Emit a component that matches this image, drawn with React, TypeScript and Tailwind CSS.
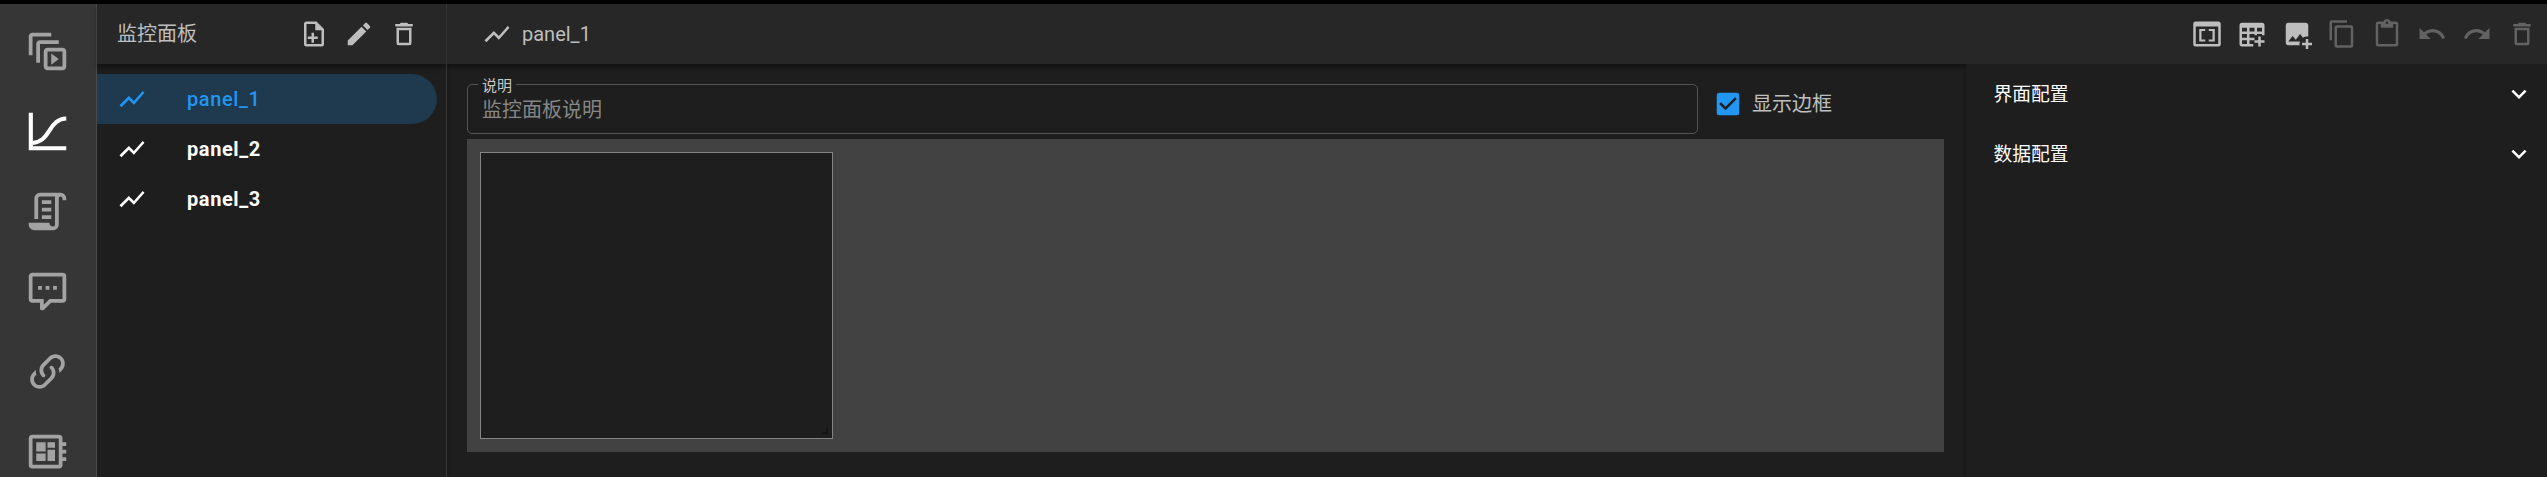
import React from "react";

const paths = {
  animation:
    "M4 2C2.9 2 2 2.9 2 4V14H4V4H14V2H4M8 6C6.9 6 6 6.9 6 8V18H8V8H18V6H8M12 10C10.9 10 10 10.9 10 12V20C10 21.1 10.9 22 12 22H20C21.1 22 22 21.1 22 20V12C22 10.9 21.1 10 20 10H12M12 12H20V20H12V12M14 13V19L18 16L14 13Z",
  script:
    "M15,20A1,1 0 0,0 16,19V4H8A1,1 0 0,0 7,5V16H5V5A3,3 0 0,1 8,2H19A3,3 0 0,1 22,5V6H20V5A1,1 0 0,0 19,4A1,1 0 0,0 18,5V9L18,19A3,3 0 0,1 15,22H5A3,3 0 0,1 2,19V18H13A2,2 0 0,0 15,20M9,6H14V8H9V6M9,10H14V12H9V10M9,14H14V16H9V14Z",
  comment:
    "M9,22A1,1 0 0,1 8,21V18H4A2,2 0 0,1 2,16V4C2,2.89 2.9,2 4,2H20A2,2 0 0,1 22,4V16A2,2 0 0,1 20,18H13.9L10.2,21.71C10,21.9 9.75,22 9.5,22V22H9M10,16V19.08L13.08,16H20V4H4V16H10M17,11H15V9H17V11M13,11H11V9H13V11M9,11H7V9H9V11Z",
  link: "M10.59,13.41C11,13.8 11,14.44 10.59,14.83C10.2,15.22 9.56,15.22 9.17,14.83C7.22,12.88 7.22,9.71 9.17,7.76V7.76L12.71,4.22C14.66,2.27 17.83,2.27 19.78,4.22C21.73,6.17 21.73,9.34 19.78,11.29L18.29,12.78C18.3,11.96 18.17,11.14 17.89,10.36L18.36,9.88C19.54,8.71 19.54,6.81 18.36,5.64C17.19,4.46 15.29,4.46 14.12,5.64L10.59,9.17C9.41,10.34 9.41,12.24 10.59,13.41M13.41,9.17C13.8,8.78 14.44,8.78 14.83,9.17C16.78,11.12 16.78,14.29 14.83,16.24V16.24L11.29,19.78C9.34,21.73 6.17,21.73 4.22,19.78C2.27,17.83 2.27,14.66 4.22,12.71L5.71,11.22C5.7,12.04 5.83,12.86 6.11,13.65L5.64,14.12C4.46,15.29 4.46,17.19 5.64,18.36C6.81,19.54 8.71,19.54 9.88,18.36L13.41,14.83C14.59,13.66 14.59,11.76 13.41,10.59C13,10.2 13,9.56 13.41,9.17Z",
  board:
    "M22,9V7H20V5A2,2 0 0,0 18,3H4A2,2 0 0,0 2,5V19A2,2 0 0,0 4,21H18A2,2 0 0,0 20,19V17H22V15H20V13H22V11H20V9H22M18,19H4V5H18V19M6,13H11V17H6V13M12,7H16V10H12V7M6,7H11V12H6V7M12,11H16V17H12V11Z",
  filePlus:
    "M14,2H6A2,2 0 0,0 4,4V20A2,2 0 0,0 6,22H18A2,2 0 0,0 20,20V8L14,2M18,20H6V4H13V9H18V20M12,11V14H15V16H12V19H10V16H7V14H10V11H12Z",
  pencil:
    "M20.71,7.04C21.1,6.65 21.1,6 20.71,5.63L18.37,3.29C18,2.9 17.35,2.9 16.96,3.29L15.12,5.12L18.87,8.87M3,17.25V21H6.75L17.81,9.93L14.06,6.18L3,17.25Z",
  trash:
    "M6,19A2,2 0 0,0 8,21H16A2,2 0 0,0 18,19V7H6V19M8,9H16V19H8V9M15.5,4L14.5,3H9.5L8.5,4H5V6H19V4H15.5Z",
  line: "M3.5,18.5L9.5,12.5L13.5,16.5L22,6.92L20.59,5.5L13.5,13.5L9.5,9.5L2,17L3.5,18.5Z",
  brackets:
    "M21,2H3A2,2 0 0,0 1,4V20A2,2 0 0,0 3,22H21A2,2 0 0,0 23,20V4A2,2 0 0,0 21,2M21,20H3V6H21V20M5.8,8H10.6V9.6H7.6V16.4H10.6V18H5.8V8M13.4,8H18.2V18H13.4V16.4H16.4V9.6H13.4V8Z",
  imagePlus:
    "M5,3A2,2 0 0,0 3,5V19A2,2 0 0,0 5,21H14.09C14.03,20.67 14,20.34 14,20C14,19.32 14.12,18.64 14.35,18H5L8.5,13.5L11,16.5L14.5,12L16.73,14.97C17.7,14.34 18.84,14 20,14C20.34,14 20.67,14.03 21,14.09V5C21,3.89 20.1,3 19,3H5M19,16V19H16V21H19V24H21V21H24V19H21V16H19Z",
  copy: "M19,21H8V7H19M19,5H8A2,2 0 0,0 6,7V21A2,2 0 0,0 8,23H19A2,2 0 0,0 21,21V7A2,2 0 0,0 19,5M16,1H4A2,2 0 0,0 2,3V17H4V3H16V1Z",
  paste:
    "M19,20H5V4H7V7H17V4H19M12,2A1,1 0 0,1 13,3A1,1 0 0,1 12,4A1,1 0 0,1 11,3A1,1 0 0,1 12,2M19,2H14.82C14.4,0.84 13.3,0 12,0C10.7,0 9.6,0.84 9.18,2H5A2,2 0 0,0 3,4V20A2,2 0 0,0 5,22H19A2,2 0 0,0 21,20V4A2,2 0 0,0 19,2Z",
  undo: "M12.5,8C9.85,8 7.45,9 5.6,10.6L2,7V16H11L7.38,12.38C8.77,11.22 10.54,10.5 12.5,10.5C16.04,10.5 19.05,12.81 20.1,16L22.47,15.22C21.08,11.03 17.15,8 12.5,8Z",
  redo: "M18.4,10.6C16.55,9 14.15,8 11.5,8C6.85,8 2.92,11.03 1.54,15.22L3.9,16C4.95,12.81 7.95,10.5 11.5,10.5C13.45,10.5 15.23,11.22 16.62,12.38L13,16H22V7L18.4,10.6Z",
  checkbox:
    "M10,17L5,12L6.41,10.58L10,14.17L17.59,6.58L19,8M19,3H5C3.89,3 3,3.89 3,5V19A2,2 0 0,0 5,21H19A2,2 0 0,0 21,19V5C21,3.89 20.1,3 19,3Z",
  chevron: "M7.41,8.58L12,13.17L16.59,8.58L18,10L12,16L6,10L7.41,8.58Z",
};

function Icon({ d, className = "size-[30px]" }: { d: string; className?: string }) {
  return (
    <svg viewBox="0 0 24 24" fill="currentColor" className={`shrink-0 ${className}`}>
      <path d={d} />
    </svg>
  );
}

function CurveIcon() {
  return (
    <svg viewBox="0 0 24 24" fill="none" stroke="currentColor" strokeWidth="2.2" className="size-[45px] shrink-0 text-white">
      <path d="M3.1 2V20.9H22" />
      <path d="M4 18.1C8.6 17.8 10.9 15 13.1 11.4C15.4 7.6 17.7 5.2 22 5.1" />
    </svg>
  );
}

function TablePlusIcon() {
  return (
    <svg viewBox="0 0 24 24" fill="currentColor" className="size-[30px] shrink-0">
      <path
        fillRule="evenodd"
        d="M4,3H20A2,2 0 0,1 22,5V13H20V12H16V13H14V12H10V15H14V17H10V20H13V22H4A2,2 0 0,1 2,20V5A2,2 0 0,1 4,3M4,7V10H8V7H4M10,7V10H14V7H10M16,7V10H20V7H16M4,12V15H8V12H4M4,17V20H8V17H4Z"
      />
      <path d="M17,14H19V17H22V19H19V22H17V19H14V17H17V14Z" />
    </svg>
  );
}

function Sidebar() {
  const tone = "size-[45px] text-[#a3a3a3]";
  return (
    <nav className="flex w-[97px] shrink-0 flex-col items-center gap-[35px] overflow-hidden border-r border-[#4a4a4a] bg-[#363636] pt-[24.6px] pr-[2px]">
      <Icon d={paths.animation} className={tone} />
      <CurveIcon />
      <Icon d={paths.script} className={tone} />
      <Icon d={paths.comment} className={tone} />
      <Icon d={paths.link} className={tone} />
      <Icon d={paths.board} className={tone} />
    </nav>
  );
}

function PanelList() {
  return (
    <section className="flex w-[350px] shrink-0 flex-col border-r border-[#393939]">
      <header className="flex h-[60px] shrink-0 items-center bg-[#272727] pr-[27px] pl-5 text-[#bebebe] shadow-[0_3px_3px_rgba(0,0,0,0.25),0_5px_5px_rgba(0,0,0,0.1)]">
        <span className="flex-1 text-xl">监控面板</span>
        <div className="flex gap-[15px]">
          <Icon d={paths.filePlus} />
          <Icon d={paths.pencil} />
          <Icon d={paths.trash} />
        </div>
      </header>
      <ul className="pt-[10px] pr-[9px] text-xl font-bold tracking-[0.6px] text-white">
        {["panel_1", "panel_2", "panel_3"].map((name, i) => (
          <li
            key={name}
            className={`flex h-[50px] items-center gap-10 pl-5 ${
              i === 0 ? "rounded-r-[25px] bg-[#1f394e] font-medium text-[#2196f3]" : ""
            }`}
          >
            <Icon d={paths.line} />
            <span>{name}</span>
          </li>
        ))}
      </ul>
    </section>
  );
}

function Toolbar() {
  return (
    <header className="z-10 flex h-[60px] shrink-0 items-center bg-[#272727] pr-[10px] pl-[35px] text-xl text-[#bebebe]">
      <Icon d={paths.line} />
      <span className="ml-[10px] flex-1">panel_1</span>
      <div className="flex gap-[15px]">
        <Icon d={paths.brackets} />
        <TablePlusIcon />
        <Icon d={paths.imagePlus} />
      </div>
      <div className="ml-[15px] flex gap-[15px] text-[#626262]">
        <Icon d={paths.copy} />
        <Icon d={paths.paste} />
        <Icon d={paths.undo} />
        <Icon d={paths.redo} />
        <Icon d={paths.trash} />
      </div>
    </header>
  );
}

function Editor() {
  return (
    <main className="flex w-[1519px] shrink-0 flex-col px-5 pt-[11px] shadow-[inset_0_3px_3px_rgba(0,0,0,0.25),inset_0_5px_5px_rgba(0,0,0,0.1)]">
      <div className="flex items-start">
        <fieldset className="h-[59px] w-[1231px] rounded-[5px] border border-[#555555] pl-[10px]">
          <legend className="h-[18px] px-1 text-[15px] leading-[22px] text-[#c8c8c8]">说明</legend>
          <div className="pl-1 text-xl leading-[34px] text-[#868686]">监控面板说明</div>
        </fieldset>
        <label className="mt-[14px] ml-[15px] flex items-center gap-[9px] text-xl leading-[30px] text-[#bebebe]">
          <Icon d={paths.checkbox} className="size-[30px] text-[#2196f3]" />
          <span>显示边框</span>
        </label>
      </div>
      <div className="mt-[5px] h-[313px] w-[1477px] bg-[#424242] p-[13px]">
        <div className="flex h-[287px] w-[353px] items-end justify-end border border-[#858585] bg-[#1e1e1e] p-1">
          <span className="size-[6px] border-r-2 border-b-2 border-[#141414]" />
        </div>
      </div>
    </main>
  );
}

function ConfigPanel() {
  return (
    <aside className="flex-1 bg-[#1e1e1e] text-[18.75px] text-white">
      {["界面配置", "数据配置"].map((title) => (
        <div key={title} className="flex h-[60px] items-center justify-between pr-[13px] pl-[27.5px]">
          <span className="pt-[2px]">{title}</span>
          <Icon d={paths.chevron} />
        </div>
      ))}
    </aside>
  );
}

export default function App() {
  return (
    <div className="flex h-[477px] w-[2547px] overflow-hidden border-t-4 border-black bg-[#1e1e1e] font-[Roboto,'Noto_Sans_CJK_SC',sans-serif]">
      <Sidebar />
      <PanelList />
      <div className="flex flex-1 flex-col">
        <Toolbar />
        <div className="flex flex-1">
          <Editor />
          <ConfigPanel />
        </div>
      </div>
    </div>
  );
}
